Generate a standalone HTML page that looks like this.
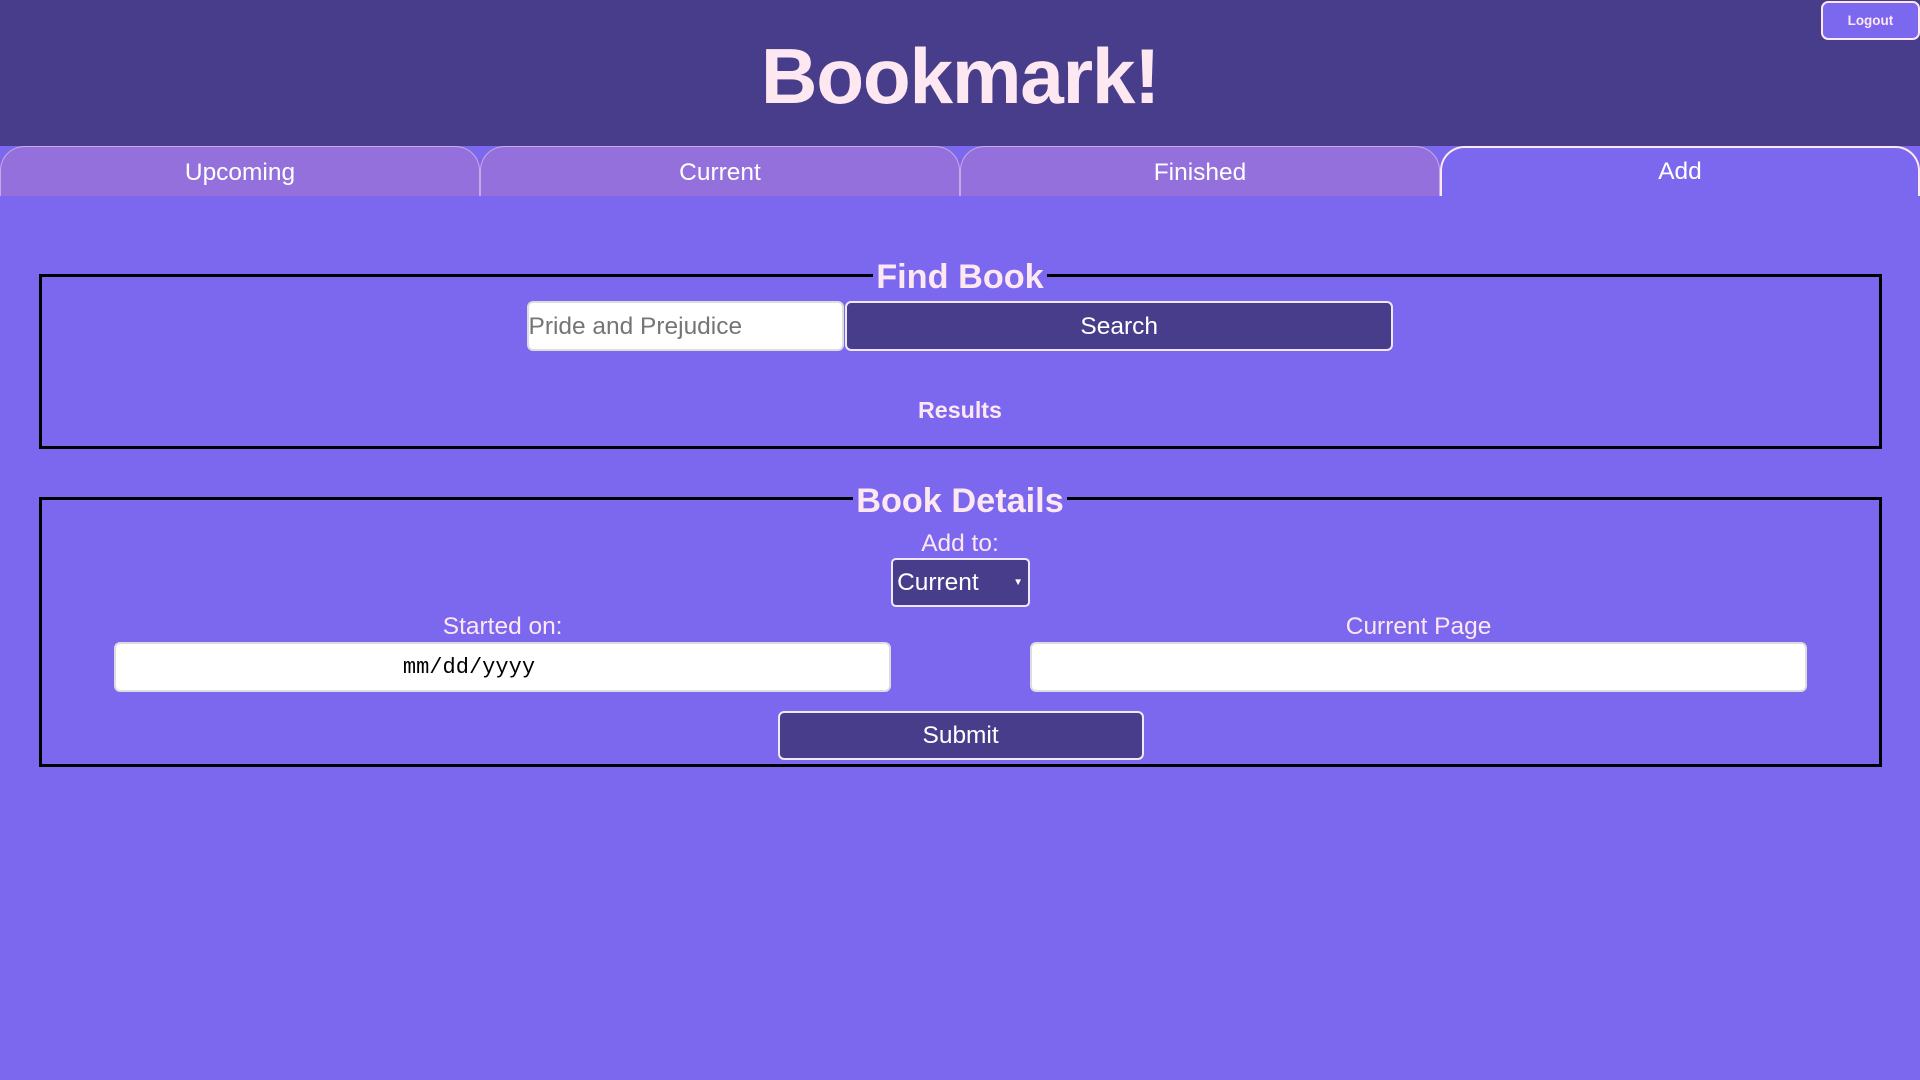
<!DOCTYPE html>
<html><head><style>
html{zoom:1.224489}
body{margin:0;width:1568px;height:882px;background:#7b68ee;position:relative;overflow:hidden;font-family:"Liberation Sans",sans-serif;color:#fde8f2}
.a{position:absolute;box-sizing:border-box}
.hdr{left:0;top:0;width:1568px;height:119px;background:#483d8b}
h1{position:absolute;left:0;width:1568px;top:23px;margin:0;text-align:center;font-size:64px;font-weight:bold;line-height:80px;letter-spacing:-1px}
.tab{top:119px;height:41px;width:392px;background:#9370db;border:1px solid #c8a8e8;border-bottom:none;border-radius:20px 20px 0 0;text-align:center;font-size:20px;line-height:42px;color:#fff}
.tab.on{background:#7b68ee;border:2px solid #fde8f2;border-bottom:none;line-height:40px}
.fs{border:2.5px solid #000;left:32px;width:1505px}
.lg{position:absolute;left:0;width:1568px;text-align:center;font-weight:bold;font-size:28px;line-height:32px}
.lg span{background:#7b68ee;padding:0 3px}
.btn{background:#483d8b;border:2px solid #f0e8f8;border-radius:5px;color:#fff;font-size:20px;text-align:center}
.inp{background:#fff;border:2px solid #ddd;border-radius:5px}
.t{position:absolute;left:0;text-align:center;font-size:20px}
</style></head><body>
<div class="a hdr"></div>
<h1>Bookmark!</h1>
<div class="a" style="left:1487px;top:1px;width:81px;height:32px;background:#7b68ee;border:2px solid #fde8f2;border-radius:6px;font-size:11px;font-weight:bold;text-align:center;line-height:30px">Logout</div>
<div class="a tab" style="left:0">Upcoming</div>
<div class="a tab" style="left:392px">Current</div>
<div class="a tab" style="left:784px">Finished</div>
<div class="a tab on" style="left:1176px">Add</div>

<div class="a fs" style="top:224px;height:143px"></div>
<div class="lg" style="top:211px"><span>Find Book</span></div>
<div class="a inp" style="left:430px;top:246px;width:259px;height:41px;font-size:20px;color:#757575;line-height:39px;padding-left:0">Pride and Prejudice</div>
<div class="a btn" style="left:690px;top:246px;width:448px;height:41px;line-height:39px">Search</div>
<div class="t" style="width:1568px;top:324px;font-weight:bold;font-size:19px">Results</div>

<div class="a fs" style="top:406px;height:220px"></div>
<div class="lg" style="top:394px"><span>Book Details</span></div>
<div class="t" style="width:1568px;top:433px">Add to:</div>
<div class="a btn" style="left:728px;top:456px;width:113px;height:40px;line-height:38px;text-align:left;padding-left:3px;border-radius:4px">Current<span style="position:absolute;right:4px;font-size:8px">▼</span></div>
<div class="t" style="left:93px;width:635px;top:501px">Started on:</div>
<div class="t" style="left:841px;width:635px;top:501px">Current Page</div>
<div class="a inp" style="left:93px;top:524px;width:635px;height:41px;font-family:'Liberation Mono',monospace;font-size:18px;color:#000;line-height:39px;text-align:center;padding-right:55px">mm/dd/yyyy</div>
<div class="a inp" style="left:841px;top:524px;width:635px;height:41px"></div>
<div class="a btn" style="left:635px;top:581px;width:299px;height:40px;line-height:38px">Submit</div>
</body></html>
